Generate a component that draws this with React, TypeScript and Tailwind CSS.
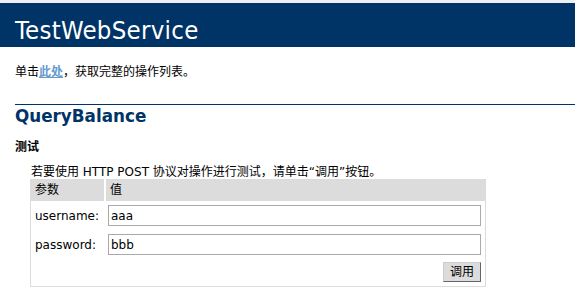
import React from "react";

const FONT = '"DejaVu Sans", Verdana, "Noto Sans CJK SC", sans-serif';

export default function App() {
  return (
    <div className="w-[575px] h-[299px] overflow-hidden bg-white text-black" style={{ fontFamily: FONT }}>
      <div className="h-[3px] bg-[#efefef]" />
      <div className="h-[44px] bg-[#003366] pl-[15px] pt-[13px]">
        <div
          className="text-white text-[25.5px] leading-[28px] tracking-[0.3px]"
          style={{ fontFamily: '"DejaVu Sans Condensed", "DejaVu Sans", sans-serif' }}
        >
          TestWebService
        </div>
      </div>
      <div className="pl-[15px]">
        <p className="mt-[17px] text-[12px] leading-[16px]">
          单击<a href="#" className="font-bold text-[#6699cc] underline">此处</a>，获取完整的操作列表。
        </p>
        <h2 className="mt-[24px] border-t border-[#003366] pt-px text-[16.8px] leading-[20px] font-bold text-[#003366]">
          QueryBalance
        </h2>
        <h3 className="mt-[13px] text-[12px] leading-[16px] font-bold">测试</h3>
        <p className="mt-[10px] pl-[16px] text-[12px] leading-[14px]">
          若要使用 HTTP POST 协议对操作进行测试，请单击“调用”按钮。
        </p>
        <div className="ml-[15px] w-[456px] border border-t-0 border-[#dcdcdc] text-[12px]">
          <div className="grid grid-cols-[73px_1fr] gap-x-[2px] h-[22px]">
            <div className="bg-[#dcdcdc] pl-[4px] leading-[22px]">参数</div>
            <div className="bg-[#dcdcdc] pl-[4px] leading-[22px]">值</div>
          </div>
          <div className="grid grid-cols-[73px_1fr] gap-x-[2px] mt-[4px] items-center">
            <div className="pl-[4px]">username:</div>
            <div className="pl-[2px] pr-[4px]">
              <input
                defaultValue="aaa"
                className="block w-full h-[21px] border border-[#a9a9a9] px-[2px] text-[12px] outline-none"
                style={{ fontFamily: FONT }}
              />
            </div>
          </div>
          <div className="grid grid-cols-[73px_1fr] gap-x-[2px] mt-[8px] items-center">
            <div className="pl-[4px]">password:</div>
            <div className="pl-[2px] pr-[4px]">
              <input
                defaultValue="bbb"
                className="block w-full h-[21px] border border-[#a9a9a9] px-[2px] text-[12px] outline-none"
                style={{ fontFamily: FONT }}
              />
            </div>
          </div>
          <div className="flex justify-end pr-[4px] mt-[7px] mb-[4px]">
            <button
              className="h-[20px] w-[38px] bg-[#dcdcdc] border border-t-[#cccccc] border-l-[#cccccc] border-b-[#666666] border-r-[#666666] text-[12px] leading-[18px]"
              style={{ fontFamily: FONT }}
            >
              调用
            </button>
          </div>
        </div>
      </div>
    </div>
  );
}
